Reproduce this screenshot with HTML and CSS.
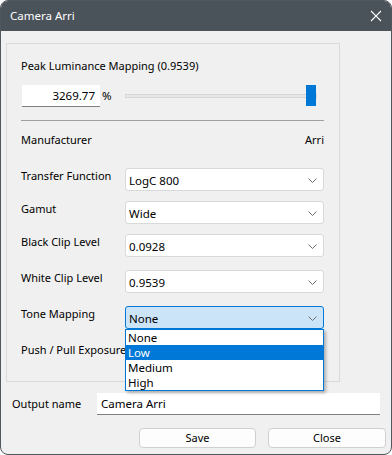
FILE: index.html
```html
<!DOCTYPE html>
<html>
<head>
<meta charset="utf-8">
<link rel="stylesheet" href="styles.css">
</head>
<body>
<div class="window">
  <div class="titlebar">
    <span class="title">Camera Arri</span>
    <svg class="close" width="12" height="12" viewBox="0 0 12 12"><path d="M1 1 L11 11 M11 1 L1 11" stroke="#ffffff" stroke-width="1.1" fill="none"/></svg>
  </div>
  <div class="body">
    <div class="group">
      <div class="peak-title">Peak Luminance Mapping (0.9539)</div>
      <div class="slider-row">
        <div class="numfield">3269.77</div>
        <span class="pct">%</span>
        <div class="slider">
          <div class="track"></div>
          <div class="thumb"></div>
        </div>
      </div>
      <div class="sep"></div>
      <div class="info-row"><span>Manufacturer</span><span>Arri</span></div>
      <div class="field-row gap-lg"><span class="label">Transfer Function</span><div class="combo"><span>LogC 800</span><svg class="chev" width="9" height="5" viewBox="0 0 9 5"><path d="M0.5 0.5 L4.5 4.5 L8.5 0.5" stroke="#6e6e6e" stroke-width="1" fill="none"/></svg></div></div>
      <div class="field-row gap-sm"><span class="label">Gamut</span><div class="combo"><span>Wide</span><svg class="chev" width="9" height="5" viewBox="0 0 9 5"><path d="M0.5 0.5 L4.5 4.5 L8.5 0.5" stroke="#6e6e6e" stroke-width="1" fill="none"/></svg></div></div>
      <div class="field-row gap-sm"><span class="label">Black Clip Level</span><div class="combo"><span>0.0928</span><svg class="chev" width="9" height="5" viewBox="0 0 9 5"><path d="M0.5 0.5 L4.5 4.5 L8.5 0.5" stroke="#6e6e6e" stroke-width="1" fill="none"/></svg></div></div>
      <div class="field-row gap-md"><span class="label">White Clip Level</span><div class="combo"><span>0.9539</span><svg class="chev" width="9" height="5" viewBox="0 0 9 5"><path d="M0.5 0.5 L4.5 4.5 L8.5 0.5" stroke="#6e6e6e" stroke-width="1" fill="none"/></svg></div></div>
      <div class="field-row gap-md"><span class="label">Tone Mapping</span>
        <div class="combo-wrap">
          <div class="combo focused"><span>None</span><svg class="chev" width="9" height="5" viewBox="0 0 9 5"><path d="M0.5 0.5 L4.5 4.5 L8.5 0.5" stroke="#6e6e6e" stroke-width="1" fill="none"/></svg></div>
          <ul class="popup">
            <li>None</li>
            <li class="sel">Low</li>
            <li>Medium</li>
            <li>High</li>
          </ul>
        </div>
      </div>
      <div class="field-row gap-md"><span class="label push">Push / Pull Exposure</span></div>
    </div>
    <div class="output-row">
      <span class="out-label">Output name</span>
      <div class="textfield">Camera Arri</div>
    </div>
    <div class="buttons">
      <div class="btn save">Save</div>
      <div class="btn close-btn">Close</div>
    </div>
  </div>
</div>
</body>
</html>
```
FILE: styles.css
```css
html, body {
  margin: 0;
  padding: 0;
  background: #ffffff;
}
body {
  font-family: "Noto Sans", "Open Sans", sans-serif;
  font-size: 11px;
  color: #000000;
}
.window {
  width: 392px;
  height: 455px;
  box-sizing: border-box;
  border: 1px solid #50575d;
  border-radius: 8px;
  overflow: hidden;
  background: #f0f0f0;
  display: flex;
  flex-direction: column;
}
.titlebar {
  height: 30px;
  flex: none;
  background: #4a535a;
  display: flex;
  align-items: center;
  justify-content: space-between;
  padding: 0 9px 0 9px;
}
.title {
  color: #ffffff;
  font-size: 11.5px;
  line-height: 16px;
}
.close {
  display: block;
}
.body {
  flex: 1;
  display: flex;
  flex-direction: column;
}
.group {
  margin: 12px 0 0 5px;
  width: 334px;
  box-sizing: border-box;
  border: 1px solid #dadada;
  padding: 0 15px 16px 14px;
}
.peak-title {
  margin-top: 14px;
  line-height: 16px;
  height: 16px;
  white-space: nowrap;
}
.slider-row {
  margin-top: 10px;
  height: 23px;
  display: flex;
  align-items: center;
}
.numfield {
  margin-left: 1px;
  width: 78px;
  height: 22px;
  box-sizing: border-box;
  background: #ffffff;
  border-bottom: 1px solid #808080;
  text-align: right;
  padding-right: 5px;
  line-height: 21px;
  font-size: 11.5px;
}
.pct {
  margin-left: 2px;
  width: 23px;
  line-height: 16px;
  font-size: 11.5px;
}
.slider {
  width: 192px;
  display: flex;
  align-items: center;
  height: 23px;
}
.track {
  flex: 1;
  height: 4px;
  box-sizing: border-box;
  background: #e7e7e7;
  border: 1px solid #d6d6d6;
}
.thumb {
  width: 10px;
  height: 21px;
  background: #0078d7;
  margin-left: -11px;
  margin-right: 1px;
}
.sep {
  margin-top: 13px;
  height: 1px;
  background: #a0a0a0;
}
.info-row {
  margin-top: 11px;
  height: 16px;
  line-height: 16px;
  display: flex;
  justify-content: space-between;
}
.field-row {
  display: flex;
  align-items: flex-start;
  height: 23px;
}
.gap-lg { margin-top: 20px; }
.gap-sm { margin-top: 10px; }
.gap-md { margin-top: 13px; }
.label {
  width: 104px;
  flex: none;
  line-height: 16px;
  white-space: nowrap;
}
.label.push {
  overflow: hidden;
  width: 106px;
}
.combo-wrap {
  position: relative;
  width: 199px;
  height: 23px;
}
.combo {
  width: 199px;
  height: 23px;
  box-sizing: border-box;
  border: 1px solid #d9d9d9;
  border-radius: 3px;
  background: #ffffff;
  display: flex;
  align-items: center;
  justify-content: space-between;
  padding: 1px 6px 0 3px;
  font-size: 11.5px;
}
.combo.focused {
  background: #cce4f7;
  border-color: #0078d7;
}
.chev {
  display: block;
}
.popup {
  position: absolute;
  left: 0;
  top: 23px;
  width: 199px;
  margin: 0;
  padding: 0;
  list-style: none;
  box-sizing: border-box;
  background: #ffffff;
  border: 1px solid #0078d7;
  box-shadow: 2px 2px 3px rgba(0, 0, 0, 0.28);
  z-index: 5;
  font-size: 11.5px;
}
.popup li {
  height: 15px;
  line-height: 15px;
  padding-left: 2px;
}
.popup li.sel {
  background: #0078d7;
  color: #ffffff;
}
.output-row {
  margin-top: 11px;
  display: flex;
  align-items: center;
  padding-left: 11px;
  height: 22px;
}
.out-label {
  width: 85px;
  flex: none;
  line-height: 16px;
}
.textfield {
  width: 283px;
  height: 22px;
  box-sizing: border-box;
  background: #ffffff;
  border-bottom: 1px solid #808080;
  padding-left: 4px;
  line-height: 21px;
  font-size: 11.5px;
}
.buttons {
  margin-top: 13px;
  display: flex;
  justify-content: flex-end;
  gap: 12px;
  padding-right: 5px;
}
.btn {
  height: 20px;
  box-sizing: border-box;
  border: 1px solid #d0d0d0;
  border-radius: 4px;
  background: #fdfdfd;
  text-align: center;
  line-height: 18px;
}
.save { width: 117px; }
.close-btn { width: 118px; }
```
